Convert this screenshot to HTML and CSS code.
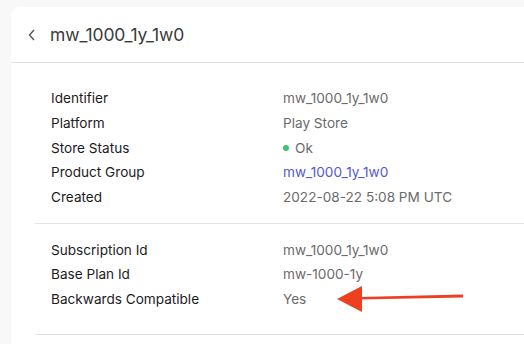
FILE: index.html
```html
<!DOCTYPE html>
<html>
<head>
	<title>mw_1000_1y_1w0</title>
	<link rel="stylesheet" href="styles.css">
</head>
<body>
	<div class="card">
		<div class="card-head">
			<svg class="back" width="8" height="12" viewBox="0 0 8 12"><path d="M6 1 L1.5 6 L6 11" fill="none" stroke="#555" stroke-width="1.4"/></svg>
			<span class="title">mw_1000_1y_1w0</span>
		</div>
		<div class="group">
			<div class="row"><span class="label">Identifier</span><span class="value">mw_1000_1y_1w0</span></div>
			<div class="row"><span class="label">Platform</span><span class="value">Play Store</span></div>
			<div class="row"><span class="label">Store Status</span><span class="value"><i class="dot"></i>Ok</span></div>
			<div class="row"><span class="label">Product Group</span><span class="value link">mw_1000_1y_1w0</span></div>
			<div class="row"><span class="label">Created</span><span class="value">2022-08-22 5:08 PM UTC</span></div>
		</div>
		<div class="group second">
			<div class="row"><span class="label">Subscription Id</span><span class="value">mw_1000_1y_1w0</span></div>
			<div class="row"><span class="label">Base Plan Id</span><span class="value">mw-1000-1y</span></div>
			<div class="row"><span class="label">Backwards Compatible</span><span class="value">Yes</span></div>
			<svg class="arrow" width="130" height="30" viewBox="0 0 130 30">
				<path d="M126 8.5 L22 11 L22 13.5 L126 11.5 Z" fill="#ee3f20"/>
				<path d="M0 13 L25 0 L25 26 Z" fill="#ee3f20"/>
			</svg>
		</div>
	</div>
</body>
</html>
```
FILE: styles.css
```css
body {
	margin: 0;
	background: #f8f8f8;
	font-family: Inter, "Noto Sans", sans-serif;
	overflow: hidden;
	height: 344px;
}

.card {
	margin: 7px 0 0 11px;
	background: #fff;
	border-top-left-radius: 9px;
	height: 337px;
	overflow: hidden;
}

.card-head {
	display: flex;
	align-items: center;
	height: 55px;
	padding-left: 17px;
	border-bottom: 1.5px solid #e2e2e2;
}

.back {
	margin-right: 14px;
	margin-top: 1px;
}

.title {
	font-size: 17.5px;
	color: #3a3a3a;
	letter-spacing: -0.1px;
}

.group {
	position: relative;
	margin-left: 24px;
	padding: 23px 0 14px 16px;
	border-bottom: 1.5px solid #e2e2e2;
}

.group.second {
	padding-top: 13px;
	padding-bottom: 22px;
}

.row {
	display: flex;
	height: 24.7px;
	align-items: center;
	font-size: 13.6px;
}

.label {
	width: 232px;
	color: #1c1c1c;
}

.value {
	color: #6b6b6b;
	display: flex;
	align-items: center;
}

.link {
	color: #5459d3;
}

.dot {
	width: 6px;
	height: 6px;
	border-radius: 50%;
	background: #3ec46d;
	margin-right: 6px;
}

.arrow {
	position: absolute;
	left: 302px;
	top: 62px;
}
```
